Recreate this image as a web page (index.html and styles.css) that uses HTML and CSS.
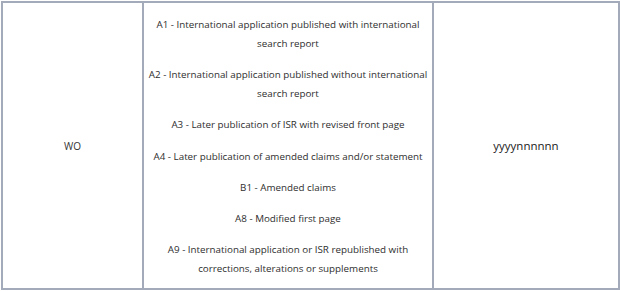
FILE: index.html
```html
<!DOCTYPE html>
<html>
<head>
<meta charset="utf-8">
<link rel="stylesheet" href="styles.css">
</head>
<body>
<table class="kinds">
  <tr>
    <td class="office">WO</td>
    <td class="codes">
      <p>A1 - International application published with international search report</p>
      <p>A2 - International application published without international search report</p>
      <p>A3 - Later publication of ISR with revised front page</p>
      <p>A4 - Later publication of amended claims and/or statement</p>
      <p>B1 - Amended claims</p>
      <p>A8 - Modified first page</p>
      <p>A9 - International application or ISR republished with corrections, alterations or supplements</p>
    </td>
    <td class="format">yyyynnnnnn</td>
  </tr>
</table>
</body>
</html>
```
FILE: styles.css
```css
html, body {
  margin: 0;
  padding: 0;
  background: #ffffff;
}
body {
  padding: 1px 0 0 1px;
  font-family: "Open Sans", "Noto Sans", sans-serif;
  color: #333;
}
.kinds {
  border-collapse: collapse;
  table-layout: fixed;
  width: 617px;
  height: 289px;
}
.kinds td {
  border: 2px solid #a3abba;
  text-align: center;
  vertical-align: middle;
  padding: 0;
}
.office {
  width: 139px;
  font-size: 10px;
  color: #333;
}
.codes {
  width: 280px;
  font-size: 9.8px;
  line-height: 19px;
  color: #2e2e2e;
}
.kinds .codes {
  vertical-align: top;
  padding: 12px 4px 8px;
}
.codes p {
  margin: 0 0 12.2px;
}
.codes p:last-child {
  margin-bottom: 0;
}
.format {
  width: 184px;
  font-size: 11.5px;
  color: #222;
}
```
